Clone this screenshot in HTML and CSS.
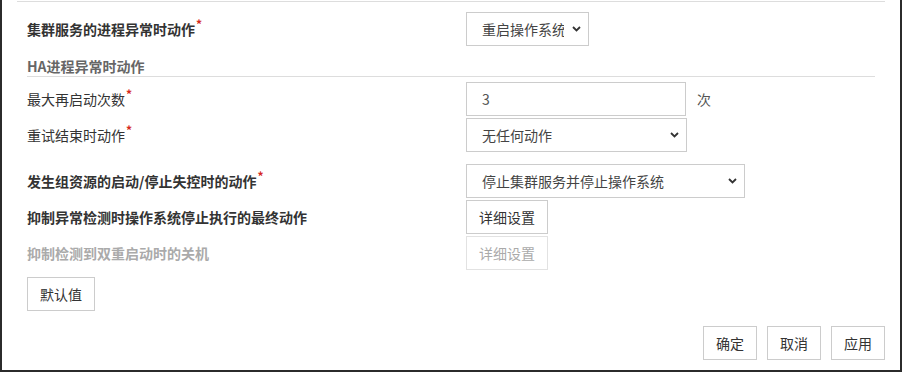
FILE: index.html
```html
<!DOCTYPE html>
<html lang="zh-CN">
<head>
  <meta charset="UTF-8">
  <title>集群属性 - 监视</title>
  <link rel="stylesheet" href="styles.css">
</head>
<body>

  <div class="dialog">
    <div class="top-rule"></div>

    <div class="row row-first">
      <label class="label strong">集群服务的进程异常时动作<sup class="req">*</sup></label>
      <div class="select-wrap w-123">
        <select class="select">
          <option selected>重启操作系统</option>
          <option>关闭操作系统</option>
        </select>
        <svg class="chevron" width="9" height="6" viewBox="0 0 9 6"><path d="M1 1 L4.5 4.5 L8 1" fill="none" stroke="#333" stroke-width="1.8"/></svg>
      </div>
    </div>

    <h3 class="section">HA进程异常时动作</h3>

    <div class="row row-after-section">
      <label class="label">最大再启动次数<sup class="req">*</sup></label>
      <input class="input w-220" type="text" value="3">
      <span class="unit">次</span>
    </div>

    <div class="row row-tight">
      <label class="label">重试结束时动作<sup class="req">*</sup></label>
      <div class="select-wrap w-221">
        <select class="select">
          <option selected>无任何动作</option>
          <option>重启操作系统</option>
        </select>
        <svg class="chevron" width="9" height="6" viewBox="0 0 9 6"><path d="M1 1 L4.5 4.5 L8 1" fill="none" stroke="#333" stroke-width="1.8"/></svg>
      </div>
    </div>

    <div class="row row-gap">
      <label class="label strong">发生组资源的启动/停止失控时的动作<sup class="req">*</sup></label>
      <div class="select-wrap w-279">
        <select class="select">
          <option selected>停止集群服务并停止操作系统</option>
          <option>无任何动作</option>
        </select>
        <svg class="chevron" width="9" height="6" viewBox="0 0 9 6"><path d="M1 1 L4.5 4.5 L8 1" fill="none" stroke="#333" stroke-width="1.8"/></svg>
      </div>
    </div>

    <div class="row row-tight">
      <label class="label strong">抑制异常检测时操作系统停止执行的最终动作</label>
      <button class="btn w-82">详细设置</button>
    </div>

    <div class="row row-tight">
      <label class="label muted">抑制检测到双重启动时的关机</label>
      <button class="btn w-82" disabled>详细设置</button>
    </div>

    <div class="defaults">
      <button class="btn w-68">默认值</button>
    </div>

    <div class="footer">
      <button class="btn w-54">确定</button>
      <button class="btn w-54">取消</button>
      <button class="btn w-54">应用</button>
    </div>
  </div>

</body>
</html>
```

FILE: styles.css
```css
html, body {
  margin: 0;
  padding: 0;
  background: #2b2b2b;
}
body {
  font-family: "Noto Sans CJK SC", "Noto Sans", sans-serif;
  font-size: 14px;
  color: #333;
  width: 902px;
  height: 372px;
  overflow: hidden;
}
.dialog {
  box-sizing: border-box;
  width: 898px;
  height: 370px;
  margin-left: 2px;
  background: #fff;
  padding: 1px 15px 0 25px;
}
.top-rule {
  height: 1px;
  background: #ddd;
  margin-left: -10px;
}
.row {
  display: flex;
  align-items: center;
  height: 34px;
}
.row-first { margin-top: 10px; }
.row-after-section { margin-top: 5px; }
.row-tight { margin-top: 2px; }
.row-gap { margin-top: 12px; }
.label {
  width: 439px;
  flex: none;
  line-height: 20px;
  white-space: nowrap;
}
.strong {
  font-weight: 700;
}
.muted {
  color: #aaa;
  font-weight: 700;
}
.req {
  color: #d62a1e;
  font-size: 12px;
  font-weight: 700;
  line-height: 0;
  vertical-align: 6px;
  margin-left: 1px;
}
.section {
  margin: 0 10px 0 0;
  padding-top: 10px;
  height: 20px;
  line-height: 20px;
  font-size: 14px;
  font-weight: 700;
  color: #666;
  border-bottom: 1px solid #ddd;
}
.select-wrap {
  position: relative;
  height: 34px;
  flex: none;
}
.select {
  appearance: none;
  -webkit-appearance: none;
  box-sizing: border-box;
  width: 100%;
  height: 34px;
  border: 1px solid #ccc;
  border-radius: 0;
  background: #fff;
  padding: 0 24px 0 15px;
  font-family: inherit;
  font-size: 14px;
  color: #444;
}
.chevron {
  position: absolute;
  right: 8px;
  top: 14px;
  pointer-events: none;
}
.input {
  box-sizing: border-box;
  height: 34px;
  border: 1px solid #ccc;
  padding: 0 15px;
  font-family: inherit;
  font-size: 14px;
  color: #555;
  flex: none;
}
.unit {
  margin-left: 11px;
  color: #555;
}
.btn {
  box-sizing: border-box;
  height: 34px;
  border: 1px solid #ccc;
  border-radius: 0;
  background: #fff;
  padding: 0;
  font-family: inherit;
  font-size: 14px;
  color: #333;
  cursor: pointer;
}
.btn:disabled {
  color: #aaa;
  border-color: #e2e2e2;
  cursor: default;
}
.w-54 { width: 54px; }
.w-68 { width: 68px; }
.w-82 { width: 82px; }
.w-123 { width: 123px; }
.w-220 { width: 220px; }
.w-221 { width: 221px; }
.w-279 { width: 279px; }
.defaults {
  margin-top: 7px;
}
.footer {
  display: flex;
  justify-content: flex-end;
  gap: 10px;
  margin-top: 15px;
}
```
